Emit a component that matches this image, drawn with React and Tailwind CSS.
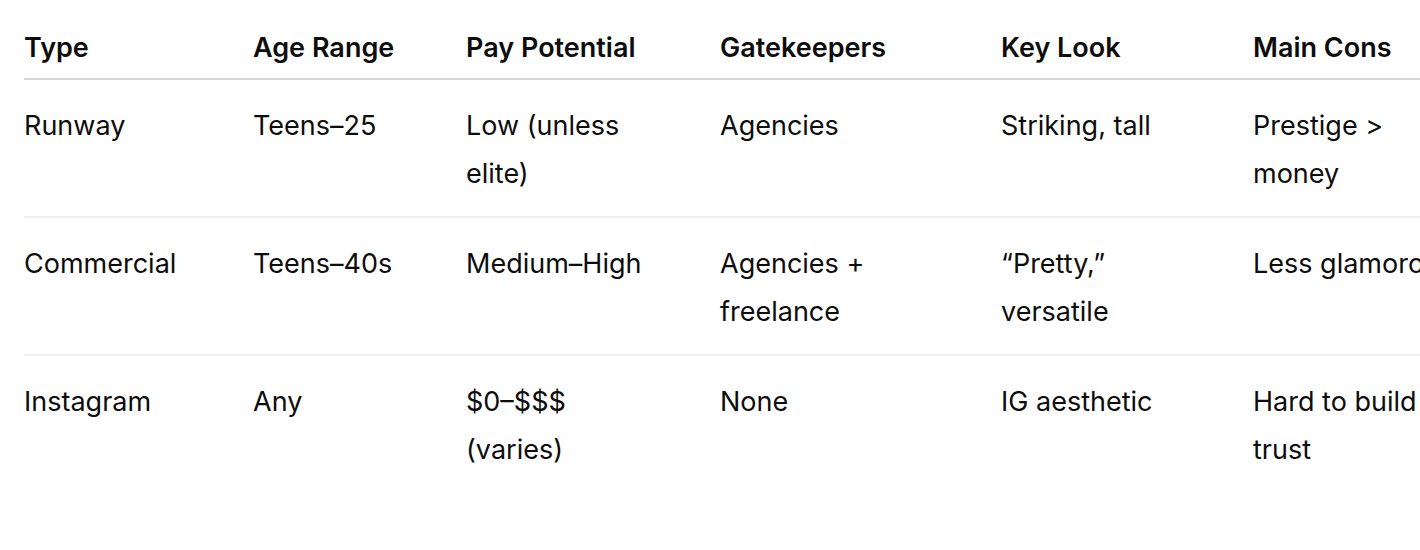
import React from 'react';

const columns = [
    { key: 'type', label: 'Type', width: 'w-[229px] pr-[48px]' },
    { key: 'age', label: 'Age Range', width: 'w-[213px] pr-[48px]' },
    { key: 'pay', label: 'Pay Potential', width: 'w-[254px] pr-[64px]' },
    { key: 'gate', label: 'Gatekeepers', width: 'w-[281px] pr-[48px]' },
    { key: 'look', label: 'Key Look', width: 'w-[252px] pr-[64px]' },
    { key: 'cons', label: 'Main Cons', width: 'w-[270px] pr-[65px]' },
];

const rows = [
    {
        type: 'Runway',
        age: 'Teens–25',
        pay: 'Low (unless elite)',
        gate: 'Agencies',
        look: 'Striking, tall',
        cons: 'Prestige > money',
    },
    {
        type: 'Commercial',
        age: 'Teens–40s',
        pay: 'Medium–High',
        gate: 'Agencies + freelance',
        look: '“Pretty,” versatile',
        cons: 'Less glamorous',
    },
    {
        type: 'Instagram',
        age: 'Any',
        pay: '$0–$$$ (varies)',
        gate: 'None',
        look: 'IG aesthetic',
        cons: 'Hard to build trust',
    },
];

function App() {
    return (
        <div className="w-[1420px] h-[550px] overflow-hidden bg-white pl-[24px] font-['Inter',sans-serif] text-[#0d0d0d]">
            <table className="table-fixed border-collapse w-[1499px] text-[27px] leading-[48px]">
                <thead>
                    <tr className="border-b-2 border-[#d6d6d6]">
                        {columns.map((col) => (
                            <th
                                key={col.key}
                                className={`${col.width} text-left font-semibold pt-[24px] pb-[6px]`}
                            >
                                {col.label}
                            </th>
                        ))}
                    </tr>
                </thead>
                <tbody>
                    {rows.map((row, i) => (
                        <tr
                            key={row.type}
                            className={i < rows.length - 1 ? 'border-b-2 border-[#f0f0f0]' : ''}
                        >
                            {columns.map((col) => (
                                <td key={col.key} className={`${col.width} align-top pt-[22px] pb-[18px] font-normal`}>
                                    {row[col.key]}
                                </td>
                            ))}
                        </tr>
                    ))}
                </tbody>
            </table>
        </div>
    );
}

export default App;
